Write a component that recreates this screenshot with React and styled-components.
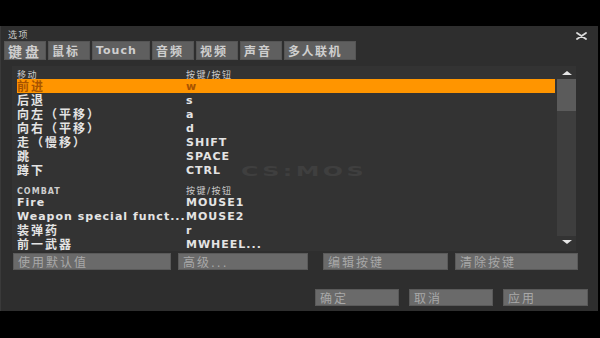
import React from "react";
import styled, { createGlobalStyle } from "styled-components";

const Global = createGlobalStyle`
  html, body { margin: 0; padding: 0; background: #000; }
  body { width: 600px; height: 338px; overflow: hidden; font-family: "DejaVu Sans", "Noto Sans CJK SC", sans-serif; }
`;

const FONT = `"DejaVu Sans", "Noto Sans CJK SC", sans-serif`;
const isCJK = (s) => /[\u3000-\u9fff\uff00-\uffef]/.test(s);

const Page = styled.div`
  padding-top: 26px;
`;

const Dialog = styled.div`
  width: 598px;
  height: 285px;
  box-sizing: border-box;
  background: #2e2e2e;
  border-left: 1px solid #3a3a3a;
  display: flex;
  flex-direction: column;
  font-family: ${FONT};
`;

const TitleBar = styled.div`
  height: 15px;
  display: flex;
  align-items: center;
  justify-content: space-between;
  padding: 0 11px 0 7px;
`;

const Title = styled.span`
  font-size: 9px;
  letter-spacing: 1.5px;
  color: #c8c8c8;
  line-height: 15px;
  padding-top: 3px;
`;

const Close = styled.svg`
  width: 11px;
  height: 8px;
  margin-top: 5px;
`;

const Tabs = styled.div`
  display: flex;
  gap: 2px;
  padding-left: 3px;
  height: 19px;
`;

const Tab = styled.div`
  width: ${(p) => p.$w}px;
  box-sizing: border-box;
  background: #5f5f5f;
  border: 1px solid #555;
  color: #cfcfcf;
  padding-left: 3px;
  display: flex;
  align-items: center;
  white-space: nowrap;
  font-size: ${(p) => p.$fs}px;
  font-weight: bold;
  letter-spacing: ${(p) => p.$ls}px;
`;

const Panel = styled.div`
  position: relative;
  margin: 6px 0 0 11px;
  width: 564px;
  height: 185px;
  background: #333;
  display: flex;
  padding-left: 5px;
  box-sizing: border-box;
  overflow: hidden;
`;

const List = styled.div`
  width: 538px;
  display: flex;
  flex-direction: column;
`;

const Header = styled.div`
  display: grid;
  grid-template-columns: 169px 1fr;
  height: ${(p) => (p.$first ? 13 : 18)}px;
  padding-top: ${(p) => (p.$first ? 0 : 5)}px;
  box-sizing: border-box;
  line-height: 13px;
  color: #cdcdcd;
  flex-shrink: 0;
`;

const HeaderCell = styled.span`
  padding-top: 3px;
  white-space: nowrap;
  font-size: ${(p) => (p.$cjk ? "9px" : "8px")};
  font-weight: ${(p) => (p.$cjk ? "normal" : "bold")};
  letter-spacing: ${(p) => (p.$cjk ? "1.5px" : "1px")};
`;

const Row = styled.div`
  display: grid;
  grid-template-columns: 169px 1fr;
  grid-template-rows: 14px;
  height: 14px;
  line-height: 14px;
  flex-shrink: 0;
  background: ${(p) => (p.$sel ? "#ff9500" : "transparent")};
  color: ${(p) => (p.$sel ? "#a85400" : "#e4e4e4")};
`;

const Cell = styled.span`
  white-space: nowrap;
  padding-top: 1px;
  font-size: ${(p) => (p.$cjk ? "12px" : "11px")};
  font-weight: bold;
  letter-spacing: ${(p) => (p.$cjk ? "2px" : "1px")};
`;

const Scrollbar = styled.div`
  margin-left: 2px;
  width: 19px;
  display: flex;
  flex-direction: column;
  align-items: stretch;
`;

const Arrow = styled.div`
  height: ${(p) => p.$h}px;
  display: flex;
  align-items: ${(p) => (p.$up ? "flex-end" : "flex-start")};
  justify-content: center;
  padding: ${(p) => (p.$up ? "0 0 4px" : "4px 0 0")};
  box-sizing: border-box;
`;

const Track = styled.div`
  height: 157px;
  background: #3e3e3e;
  display: flex;
  flex-direction: column;
`;

const Thumb = styled.div`
  height: 32px;
  background: #5b5b5b;
`;

const Watermark = styled.div`
  position: absolute;
  left: 229px;
  top: 97px;
  font-family: "DejaVu Sans", sans-serif;
  font-weight: bold;
  font-size: 14px;
  line-height: 16px;
  letter-spacing: 2px;
  color: #3f3f3f;
  transform: scale(1.7, 1);
  transform-origin: left top;
  pointer-events: none;
`;

const ButtonRow = styled.div`
  display: flex;
  margin: 2px 0 0 12px;
  height: 17px;
`;

const Button = styled.div`
  width: ${(p) => p.$w}px;
  margin-right: ${(p) => p.$gap || 0}px;
  height: 17px;
  box-sizing: border-box;
  background: #6a6a6a;
  border: 1px solid #5a5a5a;
  color: #a8a8a8;
  font-size: 12px;
  letter-spacing: 2px;
  padding-left: 4px;
  display: flex;
  align-items: center;
  white-space: nowrap;
`;

const Footer = styled.div`
  display: flex;
  justify-content: flex-end;
  gap: 10px;
  margin-top: 19px;
  padding-right: 10px;
  height: 17px;
`;

const tabs = [
  { t: "键盘", w: 42, ls: 3, fs: 14 },
  { t: "鼠标", w: 42, ls: 2, fs: 12 },
  { t: "Touch", w: 58, ls: 1, fs: 11 },
  { t: "音频", w: 42, ls: 2, fs: 12 },
  { t: "视频", w: 42, ls: 2, fs: 12 },
  { t: "声音", w: 42, ls: 2, fs: 12 },
  { t: "多人联机", w: 72, ls: 1.5, fs: 12 },
];

const sections = [
  {
    title: "移动",
    rows: [
      ["前进", "w"],
      ["后退", "s"],
      ["向左（平移）", "a"],
      ["向右（平移）", "d"],
      ["走（慢移）", "SHIFT"],
      ["跳", "SPACE"],
      ["蹲下", "CTRL"],
    ],
  },
  {
    title: "COMBAT",
    rows: [
      ["Fire", "MOUSE1"],
      ["Weapon special funct...", "MOUSE2"],
      ["装弹药", "r"],
      ["前一武器", "MWHEEL..."],
    ],
  },
];

const Tri = ({ up }) => (
  <svg width="10" height="4" viewBox="0 0 10 4">
    <polygon points={up ? "5,0 10,4 0,4" : "0,0 10,0 5,4"} fill="#e6e6e6" />
  </svg>
);

export default function App() {
  return (
    <>
      <Global />
      <Page>
        <Dialog>
          <TitleBar>
            <Title>选项</Title>
            <Close viewBox="0 0 11 8">
              <path d="M1 1 L10 7 M10 1 L1 7" stroke="#dcdcdc" strokeWidth="1.8" strokeLinecap="round" />
            </Close>
          </TitleBar>
          <Tabs>
            {tabs.map((tb) => (
              <Tab key={tb.t} $w={tb.w} $ls={tb.ls} $fs={tb.fs}>
                {tb.t}
              </Tab>
            ))}
          </Tabs>
          <Panel>
            <List>
              {sections.map((s, si) => (
                <React.Fragment key={s.title}>
                  <Header $first={si === 0}>
                    <HeaderCell $cjk={isCJK(s.title)}>{s.title}</HeaderCell>
                    <HeaderCell $cjk>按键/按钮</HeaderCell>
                  </Header>
                  {s.rows.map(([a, b], ri) => (
                    <Row key={a} $sel={si === 0 && ri === 0}>
                      <Cell $cjk={isCJK(a)}>{a}</Cell>
                      <Cell $cjk={isCJK(b)}>{b}</Cell>
                    </Row>
                  ))}
                </React.Fragment>
              ))}
            </List>
            <Scrollbar>
              <Arrow $up $h={13}>
                <Tri up />
              </Arrow>
              <Track>
                <Thumb />
              </Track>
              <Arrow $h={12}>
                <Tri />
              </Arrow>
            </Scrollbar>
            <Watermark>CS:MOS</Watermark>
          </Panel>
          <ButtonRow>
            <Button $w={158} $gap={7}>使用默认值</Button>
            <Button $w={130} $gap={15}>高级...</Button>
            <Button $w={125} $gap={7}>编辑按键</Button>
            <Button $w={123}>清除按键</Button>
          </ButtonRow>
          <Footer>
            <Button $w={84}>确定</Button>
            <Button $w={84}>取消</Button>
            <Button $w={85}>应用</Button>
          </Footer>
        </Dialog>
      </Page>
    </>
  );
}
